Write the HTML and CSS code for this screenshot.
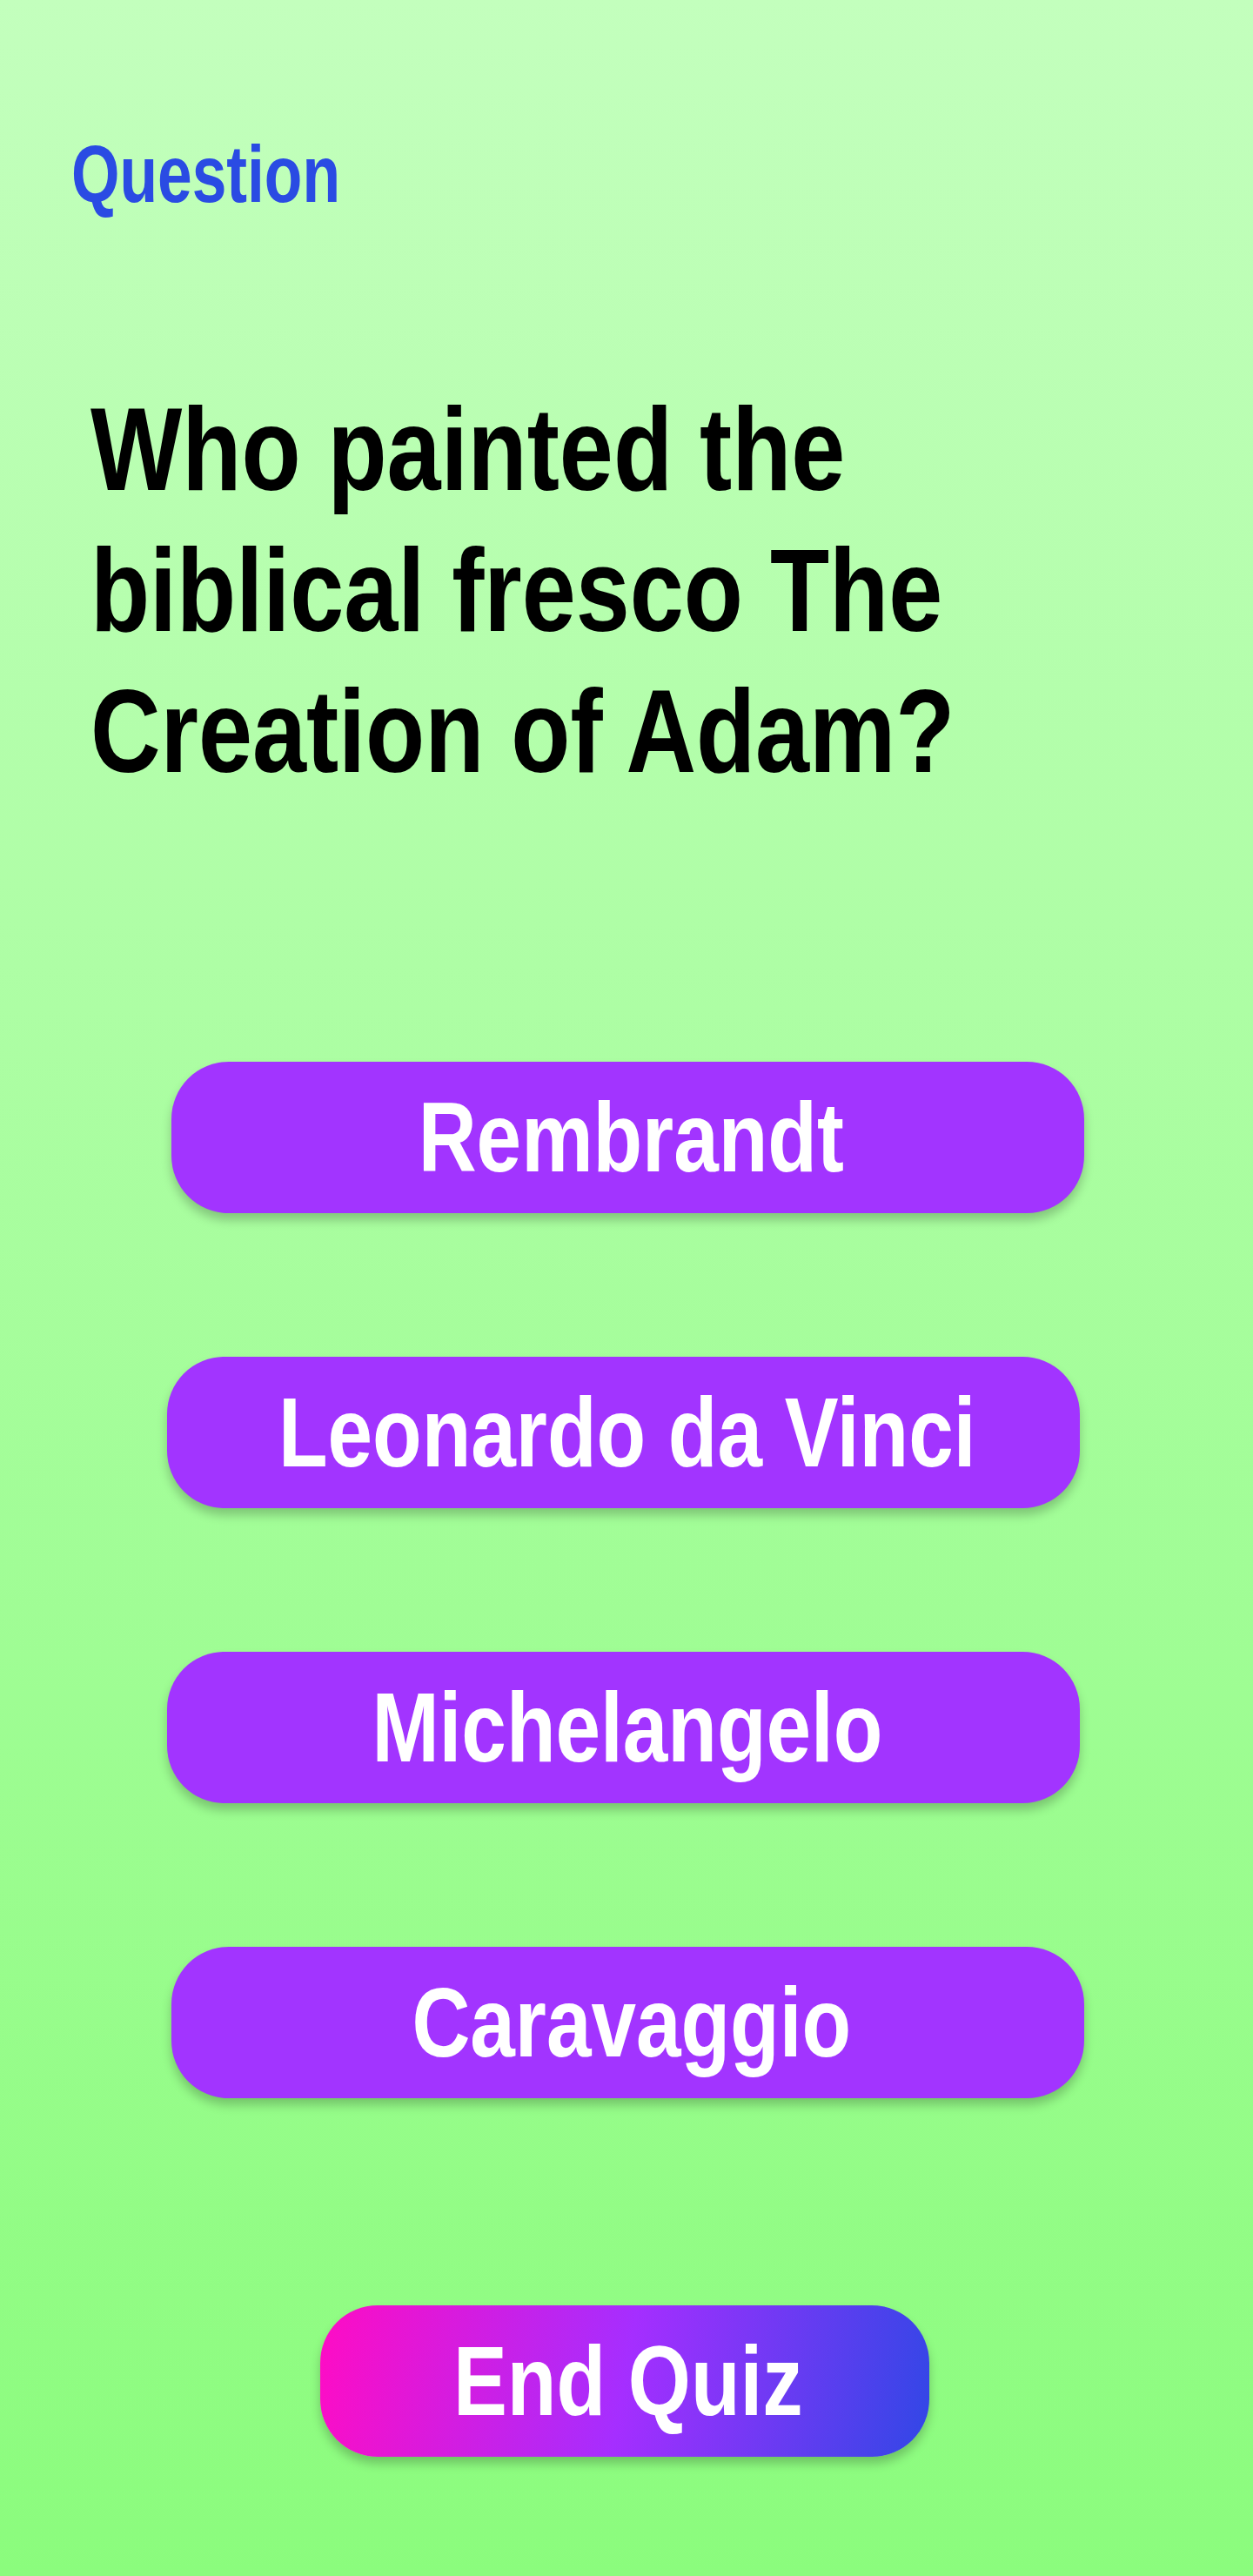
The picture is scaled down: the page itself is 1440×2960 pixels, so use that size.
FILE: index.html
```html
<!DOCTYPE html>
<html lang="en">
<head>
<meta charset="utf-8">
<title>Quiz</title>
<link rel="stylesheet" href="styles.css">
</head>
<body>
<main class="screen">
  <div class="label">Question</div>
  <h1 class="question">Who painted the biblical fresco The Creation of Adam?</h1>
  <div class="answers">
    <button class="answer answer--right"><span class="narrow">Rembrandt</span></button>
    <button class="answer answer--left"><span class="narrow">Leonardo da Vinci</span></button>
    <button class="answer answer--left"><span class="narrow">Michelangelo</span></button>
    <button class="answer answer--right"><span class="narrow">Caravaggio</span></button>
  </div>
  <div class="footer">
    <button class="end"><span class="narrow">End Quiz</span></button>
  </div>
</main>
</body>
</html>
```

FILE: styles.css
```css
html, body {
  margin: 0;
  padding: 0;
}
body {
  font-family: "Liberation Sans", Arial, sans-serif;
  background: linear-gradient(to bottom, #c3ffbd 0%, #8bfc7d 100%);
  min-height: 2960px;
}
.screen {
  width: 1440px;
  min-height: 2960px;
  display: flex;
  flex-direction: column;
}
.label {
  margin-top: 154px;
  margin-left: 82px;
  font-size: 92px;
  line-height: 92px;
  color: #2a4be3;
  font-weight: 700;
  transform: scaleX(0.775);
  transform-origin: left top;
}
.question {
  margin: 189px 0 0 104px;
  width: 1300px;
  font-size: 136px;
  line-height: 162px;
  font-weight: 700;
  color: #000;
  transform: scaleX(0.82);
  transform-origin: left top;
}
.answers {
  margin-top: 299px;
  display: flex;
  flex-direction: column;
  gap: 165px;
}
.narrow {
  display: inline-block;
  transform: scaleX(0.82);
  transform-origin: center;
  white-space: nowrap;
}
.answer, .end {
  font-family: inherit;
  border: none;
  color: #fff;
  font-size: 113px;
  line-height: 113px;
  font-weight: 700;
  height: 174px;
  border-radius: 66px;
  display: flex;
  align-items: center;
  justify-content: center;
  padding: 0 0 0 8px;
  box-shadow: 0 8px 12px rgba(0, 0, 0, 0.22);
}
.answer {
  width: 1049px;
  background: #a234ff;
}
.answer--right { margin-left: 197px; }
.answer--left { margin-left: 192px; }
.footer {
  margin-top: 238px;
  display: flex;
}
.end {
  margin-left: 368px;
  width: 700px;
  background: linear-gradient(100deg, #ff0cc4 0%, #a52eff 50%, #3147e6 100%);
}
```
